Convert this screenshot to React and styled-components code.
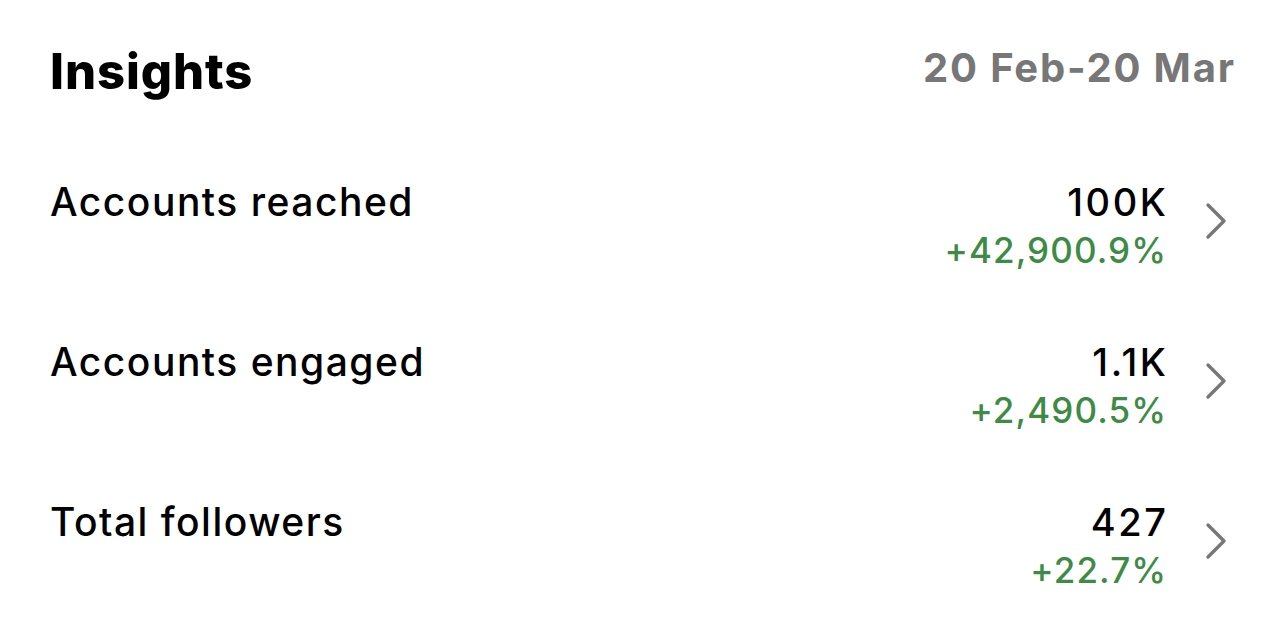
import React from 'react';
import styled, { createGlobalStyle } from 'styled-components';

const Global = createGlobalStyle`
  html, body { margin: 0; padding: 0; background: #fff; }
  body { font-family: Inter, "Noto Sans", "Liberation Sans", sans-serif; -webkit-font-smoothing: antialiased; }
`;

const Page = styled.div`
  width: 1284px;
  height: 625px;
  box-sizing: border-box;
  padding: 40px 50px 0 50px;
  background: #fff;
  overflow: hidden;
`;

const Header = styled.div`
  display: flex;
  justify-content: space-between;
  align-items: flex-start;
  height: 139px;
`;

const Title = styled.h1`
  margin: 0;
  font-size: 49px;
  line-height: 64px;
  font-weight: 800;
  color: #000;
  letter-spacing: 0.9px;
`;

const Range = styled.div`
  font-size: 40px;
  line-height: 56px;
  font-weight: 700;
  color: #777;
  letter-spacing: 1.8px;
  margin-right: -1.8px;
`;

const List = styled.div`
  display: flex;
  flex-direction: column;
  gap: 67px;
`;

const Row = styled.div`
  display: flex;
  justify-content: space-between;
  align-items: flex-start;
`;

const Label = styled.div`
  font-size: 39px;
  line-height: 46px;
  font-weight: 500;
  color: #000;
  letter-spacing: 1.5px;
`;

const Right = styled.div`
  display: flex;
  align-items: flex-start;
  gap: 38px;
  padding-right: 6px;
`;

const Values = styled.div`
  display: flex;
  flex-direction: column;
  align-items: flex-end;
`;

const Value = styled.div`
  font-size: 38px;
  line-height: 46px;
  font-weight: 500;
  color: #000;
  letter-spacing: 2.6px;
  margin-right: -2.6px;
`;

const Change = styled.div`
  margin-top: 3px;
  font-size: 35px;
  line-height: 44px;
  font-weight: 500;
  color: #3e8b45;
  letter-spacing: 1.1px;
  margin-right: -1.1px;
`;

const ChevronIcon = styled.svg`
  flex: none;
  margin-top: 22px;
`;

const Chevron = () => (
  <ChevronIcon width="24" height="40" viewBox="0 0 24 40" fill="none">
    <path d="M4 4 L20 20 L4 36" stroke="#777" strokeWidth="3.4" strokeLinecap="round" strokeLinejoin="round" />
  </ChevronIcon>
);

const rows = [
  { label: 'Accounts reached', value: '100K', change: '+42,900.9%' },
  { label: 'Accounts engaged', value: '1.1K', change: '+2,490.5%' },
  { label: 'Total followers', value: '427', change: '+22.7%' },
];

export default function App() {
  return (
    <>
      <Global />
      <Page>
        <Header>
          <Title>Insights</Title>
          <Range>20 Feb-20 Mar</Range>
        </Header>
        <List>
          {rows.map((r) => (
            <Row key={r.label}>
              <Label>{r.label}</Label>
              <Right>
                <Values>
                  <Value>{r.value}</Value>
                  <Change>{r.change}</Change>
                </Values>
                <Chevron />
              </Right>
            </Row>
          ))}
        </List>
      </Page>
    </>
  );
}
